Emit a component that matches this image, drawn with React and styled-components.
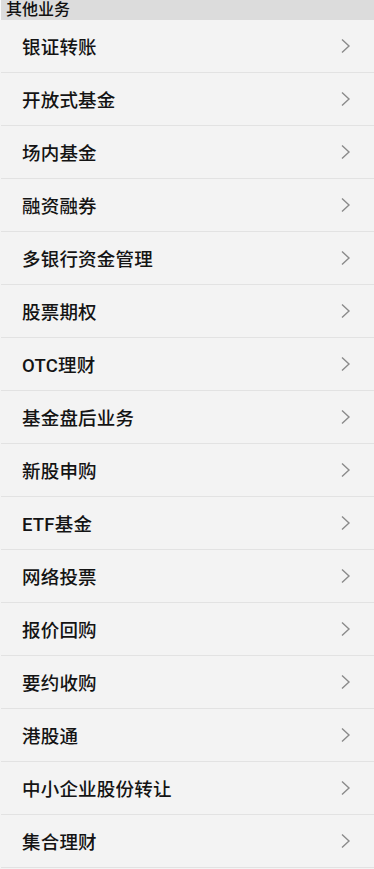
import React from "react";
import styled, { createGlobalStyle } from "styled-components";

const Global = createGlobalStyle`
  html, body { margin: 0; padding: 0; background: #f3f3f3; }
  body { font-family: Roboto, "Noto Sans CJK SC", sans-serif; }
`;

const Page = styled.div`
  width: 374px;
  background: #f3f3f3;
`;

const Header = styled.div`
  height: 20px;
  background: #dcdcdc;
  color: #111;
  font-size: 16px;
  font-weight: 500;
  line-height: 20px;
  padding-left: 5px;
  border-left: 1px solid #fafafa;
  box-sizing: border-box;
  overflow: visible;
`;

const List = styled.ul`
  list-style: none;
  margin: 0;
  padding: 0;
`;

const Row = styled.li`
  height: 53px;
  box-sizing: border-box;
  border-bottom: 1px solid #e2e2e2;
  display: flex;
  align-items: center;
  justify-content: space-between;
  padding: 0 22px 0 21px;
  margin-left: 1px;
`;

const Label = styled.span`
  font-size: 18.5px;
  font-weight: 500;
  color: #141414;
  letter-spacing: 0.2px;
`;

const Chevron = () => (
  <svg width="12" height="16" viewBox="0 0 12 16">
    <path d="M2 1.5 L9 8 L2 14.5" fill="none" stroke="#8a8a8a" strokeWidth="1.4" />
  </svg>
);

const items = [
  "银证转账",
  "开放式基金",
  "场内基金",
  "融资融券",
  "多银行资金管理",
  "股票期权",
  "OTC理财",
  "基金盘后业务",
  "新股申购",
  "ETF基金",
  "网络投票",
  "报价回购",
  "要约收购",
  "港股通",
  "中小企业股份转让",
  "集合理财",
];

export default function App() {
  return (
    <Page>
      <Global />
      <Header>其他业务</Header>
      <List>
        {items.map((t) => (
          <Row key={t}>
            <Label>{t}</Label>
            <Chevron />
          </Row>
        ))}
      </List>
    </Page>
  );
}
